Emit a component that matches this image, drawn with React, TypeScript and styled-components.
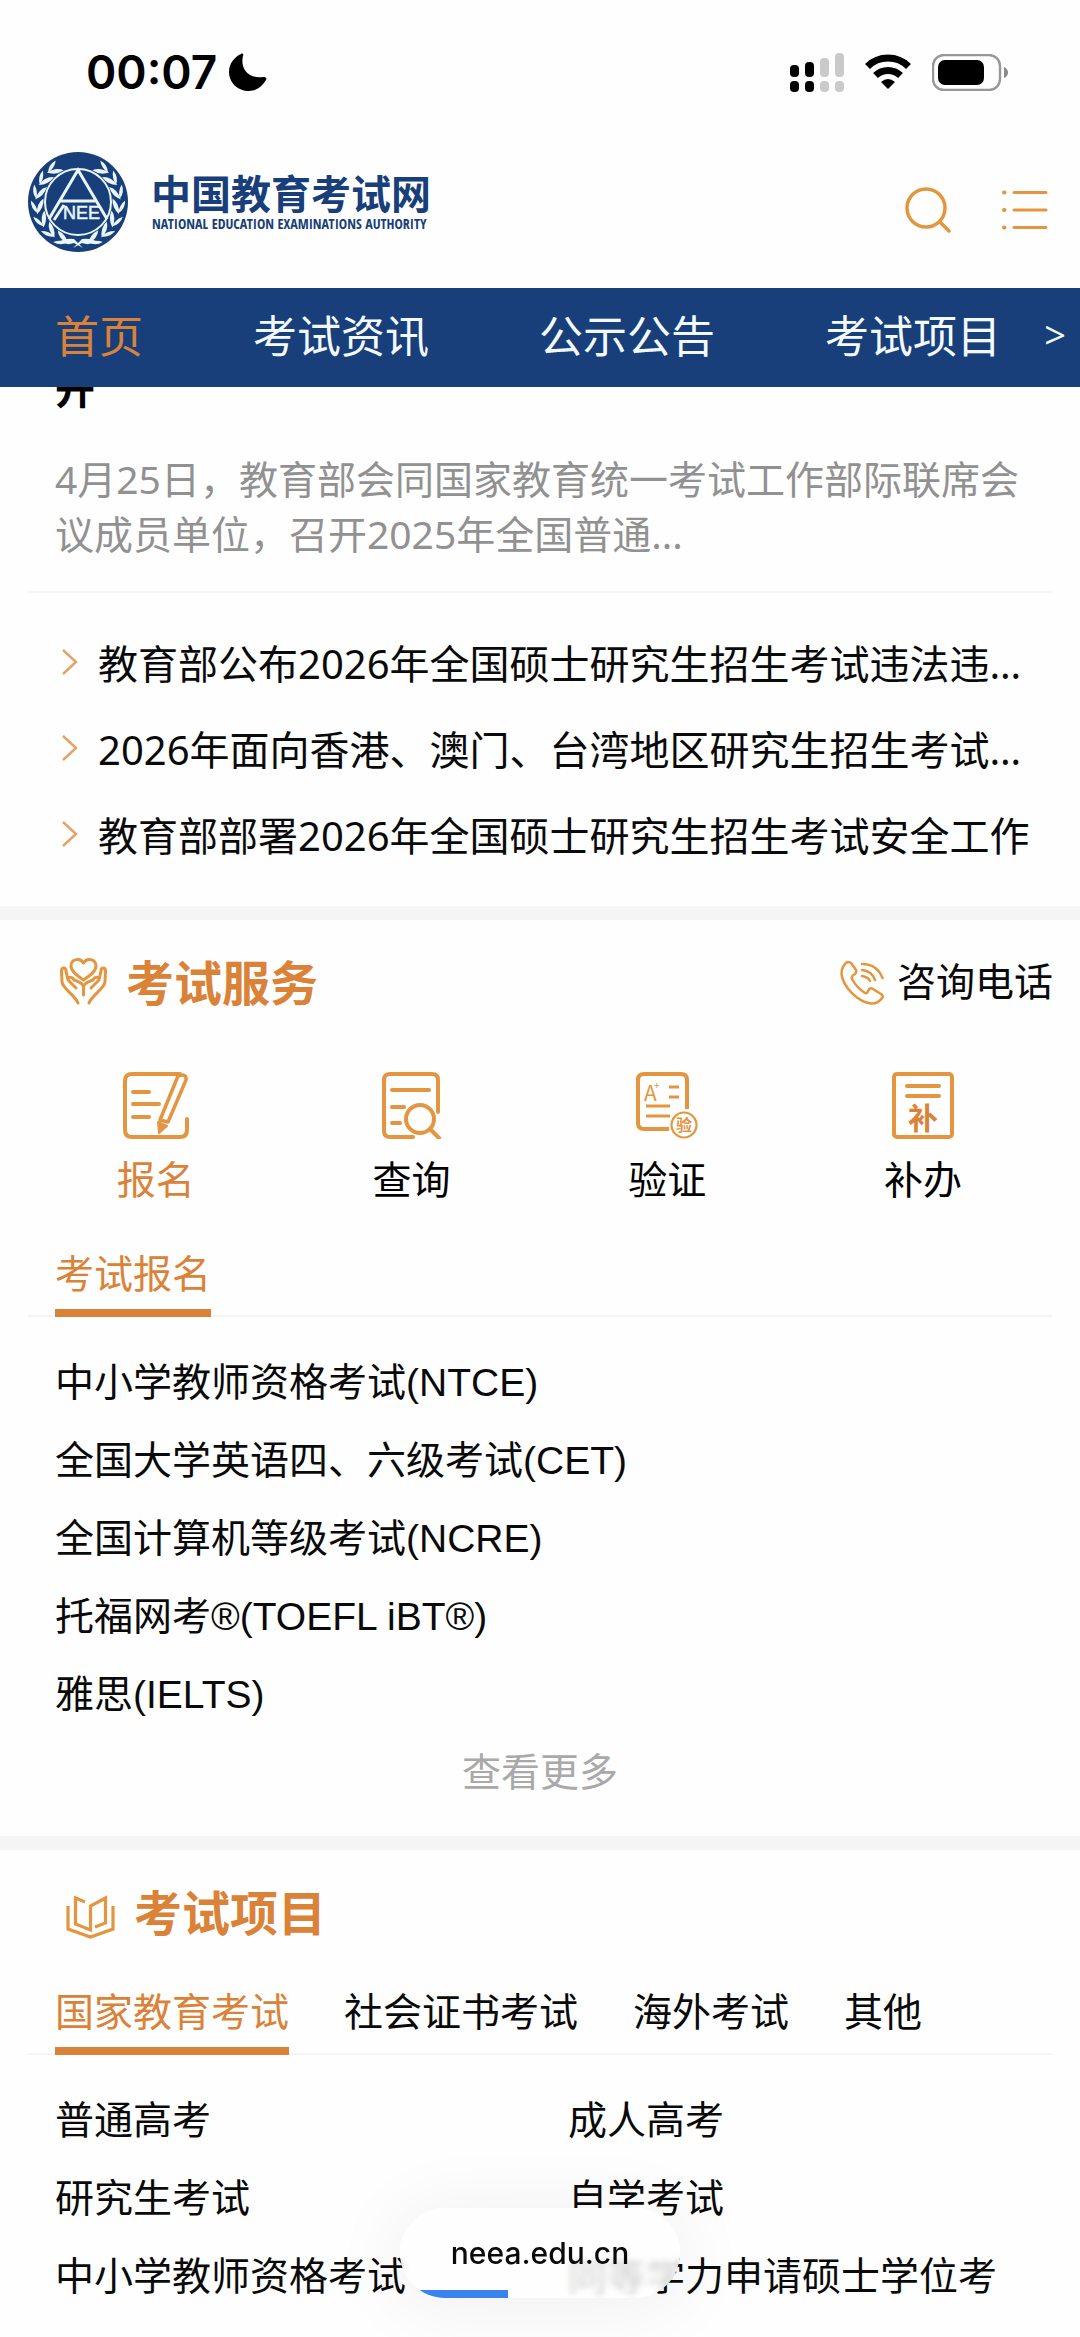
import React, { useState } from 'react';
import styled, { createGlobalStyle } from 'styled-components';

const navy = '#183f79';
const orange = '#db8239';
const amber = '#e3963f';
const line = '#f4f4f4';

const cjk = '"Noto Sans CJK SC", sans-serif';

const GlobalStyle = createGlobalStyle`
  *, *::before, *::after { box-sizing: border-box; }
  body {
    margin: 0;
    background: #fefefe;
    color: #0a0a0a;
    font-family: "Liberation Sans", ${cjk};
    font-size: 39px;
    line-height: 54px;
  }
  h1, h2, h3, p, ul { margin: 0; padding: 0; font-weight: 400; }
  ul { list-style: none; }
  a { color: inherit; text-decoration: none; }
  button { margin: 0; padding: 0; border: 0; background: none; color: inherit; font: inherit; cursor: pointer; }
  svg { display: block; flex: none; }
`;

const Page = styled.div`
  min-height: 100vh;
  overflow: hidden;
`;

const StatusBar = styled.div`
  display: flex;
  align-items: center;
  justify-content: space-between;
  height: 144px;
  padding: 0 72px 0 86px;
`;

const Clock = styled.div`
  display: flex;
  align-items: center;
  gap: 12px;
  color: #000;
  font: 600 46px/54px Inter, sans-serif;
`;

const StatusIcons = styled.div`
  display: flex;
  align-items: center;
  gap: 21px;
`;

const Header = styled.header`
  display: flex;
  align-items: flex-start;
  justify-content: space-between;
  height: 144px;
  padding: 8px 32px 0 28px;
`;

const Brand = styled.a`
  display: flex;
  align-items: center;
  gap: 23px;
  color: ${navy};
`;

const BrandText = styled.span`
  display: flex;
  flex-direction: column;
`;

const BrandName = styled.span`
  font: 700 40px/44px ${cjk};
`;

const BrandLatin = styled.span`
  padding-left: 1px;
  font: 700 14px/20px "Liberation Sans Narrow", "Open Sans Condensed", "Liberation Sans", sans-serif;
  white-space: nowrap;
`;

const Tools = styled.div`
  display: flex;
  align-items: center;
  gap: 51px;
  padding-top: 35px;
  color: ${amber};
`;

const Nav = styled.nav`
  display: flex;
  align-items: center;
  justify-content: space-between;
  height: 99px;
  padding: 0 14px 8px 55px;
  background: ${navy};
  color: #f2faff;
  font: 400 44px/60px ${cjk};
`;

const NavLinks = styled.div`
  display: flex;
  gap: 110px;
`;

const NavLink = styled.a<{ $active?: boolean }>`
  flex: none;
  color: ${(p) => (p.$active ? orange : 'inherit')};
`;

const NavMore = styled.button`
  font: 400 38px/44px "Open Sans", sans-serif;
`;

const Article = styled.article`
  margin: 0 28px;
  padding: 0 27px 30px;
  border-bottom: 2px solid ${line};
`;

const Headline = styled.h1`
  display: flex;
  align-items: flex-end;
  height: 30px;
  overflow: hidden;
  color: #000;
  font: 700 40px/60px ${cjk};
`;

const Summary = styled.p`
  padding-top: 34px;
  color: #919191;
  font: 400 39px/55px "Noto Sans", ${cjk};
`;

const NewsList = styled.ul`
  padding: 28px 50px 27px 62px;
`;

const NewsItem = styled.li`
  display: flex;
  align-items: center;
  gap: 20px;
  height: 86px;
  color: #e6a168;
`;

const NewsLink = styled.a`
  min-width: 0;
  overflow: hidden;
  white-space: nowrap;
  text-overflow: ellipsis;
  color: #0a0a0a;
  font: 400 40px/60px "Noto Sans", ${cjk};
`;

const Section = styled.section`
  border-top: 14px solid #f5f5f5;
`;

const SectionHead = styled.div`
  display: flex;
  align-items: center;
  justify-content: space-between;
  height: 126px;
  padding: 0 27px 0 60px;
  color: ${amber};
`;

const SectionTitle = styled.h2<{ $inset?: boolean }>`
  display: flex;
  align-items: center;
  gap: 19px;
  padding-left: ${(p) => (p.$inset ? 6 : 0)}px;
  font: 700 48px/60px ${cjk};

  span { padding-bottom: 6px; color: ${orange}; }
`;

const Hotline = styled.a`
  display: flex;
  align-items: center;
  gap: 13px;

  span { color: #0a0a0a; }
`;

const Services = styled.div`
  display: grid;
  grid-template-columns: repeat(4, 1fr);
  padding: 26px 29px 30px 28px;
`;

const Service = styled.button<{ $active?: boolean }>`
  display: flex;
  flex-direction: column;
  align-items: center;
  gap: 15px;
  color: ${(p) => (p.$active ? orange : '#000')};

  svg { color: ${amber}; }
`;

const Tabs = styled.div`
  display: flex;
  gap: 55px;
  margin: 0 28px;
  padding: 10px 27px 0;
  box-shadow: inset 0 -2px ${line};
`;

const Tab = styled.button<{ $active?: boolean }>`
  padding-bottom: 7px;
  border-bottom: 8px solid ${(p) => (p.$active ? orange : 'transparent')};
  color: ${(p) => (p.$active ? orange : 'inherit')};
`;

const ExamList = styled.ul<{ $columns?: number }>`
  display: grid;
  grid-template-columns: repeat(${(p) => p.$columns ?? 1}, minmax(0, 1fr));
  padding: 27px 27px 0;
`;

const ExamItem = styled.li`
  padding: 12px 28px;
  white-space: nowrap;
`;

const More = styled.button`
  display: block;
  width: 100%;
  padding: 12px 0 36px;
  color: #a9a9a9;
`;

const PillShadow = styled.div`
  position: fixed;
  left: 50%;
  bottom: 39px;
  width: 280px;
  height: 90px;
  margin-left: -140px;
  border-radius: 45px;
  box-shadow: 0 6px 70px 10px rgba(0, 0, 0, 0.05);
`;

const AddressPill = styled.div`
  position: fixed;
  left: 50%;
  bottom: 39px;
  width: 280px;
  height: 90px;
  margin-left: -140px;
  border-radius: 45px;
  overflow: hidden;
  background: linear-gradient(#fefefe 50%, rgba(254, 254, 254, 0.8) 62%);
  backdrop-filter: blur(3px);
  color: #0a0a0a;
  font: 500 30px/90px Inter, sans-serif;
  text-align: center;
`;

const Progress = styled.div`
  position: absolute;
  left: 0;
  bottom: 0;
  width: 108px;
  height: 8px;
  background: #3b83ec;
`;

const leaves = [24, 44, 64, 84, 104, 124, 144];

const Wreath = () => (
  <>
    {leaves.map((a) => {
      const r = (a * Math.PI) / 180;
      const x = 50 - 41 * Math.sin(r);
      const y = 50 + 41 * Math.cos(r);
      return (
        <g key={a} transform={`translate(${x} ${y}) rotate(${a})`}>
          <path d="M8 0Q1-7-8-6Q-3 1 8 0Z" transform="rotate(8)" />
          <path d="M7 1Q1 7-7 5Q-1 0 7 1Z" transform="rotate(-6)" />
        </g>
      );
    })}
    <path d="M55 96L46 87Q38 86 32 89Q38 94 46 91Z" />
  </>
);

const Emblem = () => (
  <svg width="100" height="100" viewBox="0 0 100 100" aria-hidden="true">
    <circle cx="50" cy="50" r="50" fill={navy} />
    <g fill="#e9f6ff">
      <Wreath />
      <g transform="translate(100 0) scale(-1 1)"><Wreath /></g>
    </g>
    <circle cx="50" cy="50" r="33" fill={navy} stroke="#e9f6ff" strokeWidth="2" />
    <path d="M21 67L50 18L79 67M31 49H69M26 68L36 53" fill="none" stroke="#e9f6ff" strokeWidth="3" />
    <text x="35" y="67" fill="#e9f6ff" stroke="#e9f6ff" strokeWidth="0.500" fontFamily="Liberation Sans, sans-serif" fontSize="18">NEE</text>
  </svg>
);

const Moon = () => (
  <svg width="38" height="38" viewBox="0 0 38 38" fill="#000" aria-hidden="true">
    <path d="M12 1C13 0 15 1 14 3C11 15 19 26 34 24C37 24 38 25 37 27C33 34 27 38 20 38C9 38 0 30 0 19C0 11 5 4 12 1Z" />
  </svg>
);

const Signal = () => (
  <svg width="54" height="39" viewBox="0 0 54 39" aria-hidden="true">
    <rect x="0" y="12" width="9" height="12" rx="4" />
    <rect x="15" y="9" width="9" height="15" rx="4" />
    <rect x="0" y="28" width="9" height="11" rx="4" />
    <rect x="15" y="28" width="9" height="11" rx="4" />
    <g fill="#cacaca">
      <rect x="30" y="5" width="9" height="19" rx="4" />
      <rect x="45" y="0" width="9" height="24" rx="4" />
      <rect x="30" y="28" width="9" height="11" rx="4" />
      <rect x="45" y="28" width="9" height="11" rx="4" />
    </g>
  </svg>
);

const Wifi = () => (
  <svg width="46" height="36" viewBox="0 0 46 36" aria-hidden="true">
    <path d="M2.500 12.500A29 29 0 0 1 43.500 12.500M10.500 21.500A18 18 0 0 1 35.500 21.500" fill="none" stroke="#000" strokeWidth="7" />
    <path d="M23 35L16 28Q23 22 30 28Z" />
  </svg>
);

const Battery = () => (
  <svg width="76" height="37" viewBox="0 0 76 37" aria-hidden="true">
    <rect x="1" y="1" width="67" height="35" rx="11" fill="none" stroke="#979797" strokeWidth="2.400" />
    <rect x="6" y="6" width="46" height="25" rx="7" />
    <path d="M72 13Q76 15 76 18.500T72 24Z" fill="#8a8a8a" />
  </svg>
);

const SearchIcon = () => (
  <svg width="46" height="46" viewBox="0 0 46 46" fill="none" stroke="currentColor" strokeWidth="3.500" strokeLinecap="round" aria-hidden="true">
    <circle cx="21" cy="21" r="19" />
    <path d="M35 35L44 44" />
  </svg>
);

const MenuIcon = () => (
  <svg width="46" height="40" viewBox="0 0 46 40" fill="none" stroke="currentColor" strokeWidth="3" strokeLinecap="round" aria-hidden="true">
    <path d="M12 2.500H44M12 20H44M12 37.500H44" />
    <path d="M2 2.500H2.500M2 20H2.500M2 37.500H2.500" strokeWidth="4" />
  </svg>
);

const Chevron = () => (
  <svg width="16" height="30" viewBox="0 0 16 30" fill="none" stroke="currentColor" strokeWidth="2.400" aria-hidden="true">
    <path d="M1 1L14 13L1 25" />
  </svg>
);

const CareIcon = () => (
  <svg width="47" height="52" viewBox="0 0 47 52" fill="none" stroke="currentColor" strokeWidth="3" strokeLinecap="round" strokeLinejoin="round" aria-hidden="true">
    <path d="M23.500 23C16 18 11 14 11 9C11 2 20 0 23.500 6C27 0 36 2 36 9C36 14 31 18 23.500 23Z" />
    <path d="M18 46C15 38 3 32 2 25L1.500 14C1.500 10 6 10 6 14L8 23L16 31M8 23C8 19 13 20 14 23C19 25 23 26 23.500 30V38" />
    <path d="M29 46C32 38 44 32 45 25L45.500 14C45.500 10 41 10 41 14L39 23L31 31M39 23C39 19 34 20 33 23C28 25 24 26 23.500 30" />
  </svg>
);

const PhoneIcon = () => (
  <svg width="44" height="44" viewBox="0 0 44 44" fill="none" stroke="currentColor" strokeWidth="2.500" strokeLinecap="round" strokeLinejoin="round" aria-hidden="true">
    <path d="M6 2Q8 0 11 2L16 9Q17 11 15 13Q11 15 12 18Q17 27 25 32Q27 33 28 30Q30 26 33 28L41 33Q44 35 42 37Q38 43 31 42.500C18 41 3 26 1.500 13Q1.500 6 6 2Z" />
    <path d="M22 3Q37 3 42.500 17M22 9Q32 10 35 19M22 15Q28 16 30 20" />
  </svg>
);

const BookIcon = () => (
  <svg width="49" height="54" viewBox="0 0 49 54" fill="none" stroke="currentColor" strokeWidth="3.200" aria-hidden="true">
    <path d="M2 20V43L24.500 51L47 43V20" />
    <path d="M19 16L9.500 12V38L24.500 44V20L39.500 12V37L29 41" />
  </svg>
);

const ApplyIcon = () => (
  <svg width="66" height="67" viewBox="0 0 66 67" fill="none" stroke="currentColor" strokeWidth="4" strokeLinecap="round" strokeLinejoin="round" aria-hidden="true">
    <path d="M64 47V58Q64 65 57 65H9Q2 65 2 58V9Q2 2 9 2H57" />
    <path d="M10 20H26M10 32H36M10 45H26" />
    <path d="M55 4Q64 1 63 8L45 50L37 48Z" strokeWidth="3.500" />
    <path d="M35 50L44 54L36 61Z" fill="currentColor" strokeWidth="2" />
  </svg>
);

const QueryIcon = () => (
  <svg width="59" height="67" viewBox="0 0 59 67" fill="none" stroke="currentColor" strokeWidth="4" strokeLinecap="round" aria-hidden="true">
    <path d="M56 40V8Q56 2 50 2H8Q2 2 2 8V59Q2 65 8 65H31" />
    <path d="M10 18H47M10 35H22M10 51H18" />
    <circle cx="38" cy="47" r="14" />
    <path d="M48 57L57 66" />
  </svg>
);

const VerifyIcon = () => (
  <svg width="62" height="67" viewBox="0 0 62 67" aria-hidden="true">
    <path d="M51 37V8Q51 2 45 2H8Q2 2 2 8V51Q2 57 8 57H33" fill="none" stroke="currentColor" strokeWidth="4" />
    <path d="M33 15H43M33 25H43M10 34H34M10 44H34" fill="none" stroke="currentColor" strokeWidth="3" />
    <circle cx="48" cy="53" r="12.500" fill="none" stroke="currentColor" strokeWidth="2.200" />
    <g fill="currentColor" fontFamily="Noto Sans CJK SC, sans-serif">
      <text x="8" y="29" fontSize="21">A</text>
      <text x="18" y="17" fontSize="10">+</text>
      <text x="48" y="59" fontSize="16" fontWeight="700" textAnchor="middle">验</text>
    </g>
  </svg>
);

const ReissueIcon = () => (
  <svg width="62" height="67" viewBox="0 0 62 67" aria-hidden="true">
    <rect x="2" y="2" width="58" height="63" rx="3" fill="none" stroke="currentColor" strokeWidth="4" />
    <path d="M15 14H47M15 24H47" fill="none" stroke="currentColor" strokeWidth="4" strokeLinecap="round" />
    <text x="31" y="57" fill={orange} fontFamily="Noto Sans CJK SC, sans-serif" fontSize="30" fontWeight="700" textAnchor="middle">补</text>
  </svg>
);

const navItems = ['首页', '考试资讯', '公示公告', '考试项目'];

const news = [
  '教育部公布2026年全国硕士研究生招生考试违法违规行为举报电话',
  '2026年面向香港、澳门、台湾地区研究生招生考试报名公告',
  '教育部部署2026年全国硕士研究生招生考试安全工作',
];

const services = [
  { label: '报名', Icon: ApplyIcon },
  { label: '查询', Icon: QueryIcon },
  { label: '验证', Icon: VerifyIcon },
  { label: '补办', Icon: ReissueIcon },
];

const registrations = [
  '中小学教师资格考试(NTCE)',
  '全国大学英语四、六级考试(CET)',
  '全国计算机等级考试(NCRE)',
  '托福网考®(TOEFL iBT®)',
  '雅思(IELTS)',
];

const projectTabs = ['国家教育考试', '社会证书考试', '海外考试', '其他'];

const projects = [
  '普通高考',
  '成人高考',
  '研究生考试',
  '自学考试',
  '中小学教师资格考试',
  '同等学力申请硕士学位考',
];

export default function App() {
  const [service, setService] = useState(0);
  const [project, setProject] = useState(0);

  return (
    <>
      <GlobalStyle />
      <Page>
        <StatusBar>
          <Clock>00:07<Moon /></Clock>
          <StatusIcons><Signal /><Wifi /><Battery /></StatusIcons>
        </StatusBar>
        <Header>
          <Brand href="#">
            <Emblem />
            <BrandText>
              <BrandName>中国教育考试网</BrandName>
              <BrandLatin>NATIONAL EDUCATION EXAMINATIONS AUTHORITY</BrandLatin>
            </BrandText>
          </Brand>
          <Tools>
            <button aria-label="搜索"><SearchIcon /></button>
            <button aria-label="菜单"><MenuIcon /></button>
          </Tools>
        </Header>
        <Nav>
          <NavLinks>
            {navItems.map((item, i) => (
              <NavLink key={item} href="#" $active={i === 0}>{item}</NavLink>
            ))}
          </NavLinks>
          <NavMore>&gt;</NavMore>
        </Nav>
        <main>
          <Article>
            <Headline>开</Headline>
            <Summary>4月25日，教育部会同国家教育统一考试工作部际联席会议成员单位，召开2025年全国普通...</Summary>
          </Article>
          <NewsList>
            {news.map((item) => (
              <NewsItem key={item}>
                <Chevron />
                <NewsLink href="#">{item}</NewsLink>
              </NewsItem>
            ))}
          </NewsList>
          <Section>
            <SectionHead>
              <SectionTitle><CareIcon /><span>考试服务</span></SectionTitle>
              <Hotline href="#"><PhoneIcon /><span>咨询电话</span></Hotline>
            </SectionHead>
            <Services>
              {services.map(({ label, Icon }, i) => (
                <Service key={label} $active={i === service} onClick={() => setService(i)}>
                  <Icon />
                  <span>{label}</span>
                </Service>
              ))}
            </Services>
            <Tabs>
              <Tab $active>考试报名</Tab>
            </Tabs>
            <ExamList>
              {registrations.map((item) => (
                <ExamItem key={item}><a href="#">{item}</a></ExamItem>
              ))}
            </ExamList>
            <More>查看更多</More>
          </Section>
          <Section>
            <SectionHead>
              <SectionTitle $inset><BookIcon /><span>考试项目</span></SectionTitle>
            </SectionHead>
            <Tabs>
              {projectTabs.map((item, i) => (
                <Tab key={item} $active={i === project} onClick={() => setProject(i)}>{item}</Tab>
              ))}
            </Tabs>
            <ExamList $columns={2}>
              {projects.map((item) => (
                <ExamItem key={item}><a href="#">{item}</a></ExamItem>
              ))}
            </ExamList>
          </Section>
        </main>
      </Page>
      <PillShadow />
      <AddressPill>
        neea.edu.cn
        <Progress />
      </AddressPill>
    </>
  );
}
